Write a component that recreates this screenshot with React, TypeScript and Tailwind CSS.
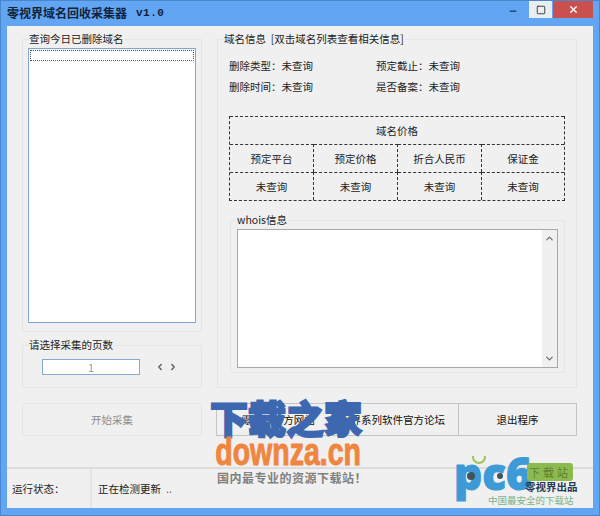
import { ChevronDown, ChevronLeft, ChevronRight, ChevronUp, Minus, Square, X } from 'lucide-react'

const cjk = "font-['Noto_Sans_CJK_SC','Liberation_Sans',sans-serif]"

function GroupBox({ label, className, children }: { label: string; className: string; children?: React.ReactNode }) {
  return (
    <div className={`relative border border-[#e6e6e6] ${className}`}>
      <span className="absolute left-[6px] -top-[9px] whitespace-pre bg-[#f0f0f0] pr-px text-[10.5px] leading-[16px] text-[#222]">{label}</span>
      {children}
    </div>
  )
}

function Cell({ children, last }: { children: React.ReactNode; last?: boolean }) {
  return (
    <div className={`flex h-7 items-center justify-center border-t border-dashed border-[#333] ${last ? '' : 'border-r'}`}>
      {children}
    </div>
  )
}

export default function App() {
  return (
    <div className={`relative flex h-[516px] w-[600px] flex-col overflow-hidden border border-[#4a86cc] bg-[#62a5f3] text-[10.5px] text-[#222] ${cjk}`}>
      {/* title bar */}
      <div className="flex h-[25px] shrink-0 items-start justify-between px-[6px]">
        <div className="mt-[2px] flex items-center text-xs font-bold leading-[20px] text-[#10233c]">
          零视界域名回收采集器
          <span className="ml-[9px] font-['Liberation_Mono',monospace] text-[11px] tracking-[0.5px]">v1.0</span>
        </div>
        <div className="flex h-[17px] items-stretch">
          <div className="mr-[4px] flex w-[24px] items-center justify-center">
            <Minus size={10} strokeWidth={3} className="mt-[3px] text-[#1c3553]" />
          </div>
          <div className="flex w-[23px] items-center justify-center bg-[#e9eef3]">
            <Square size={10} strokeWidth={2} className="text-[#222]" />
          </div>
          <div className="ml-px flex w-[40px] items-center justify-center bg-[#c9504e]">
            <X size={11} strokeWidth={3} className="text-white" />
          </div>
        </div>
      </div>

      {/* client area */}
      <div className="mx-[6px] mb-[7px] flex flex-1 flex-col bg-[#f0f0f0]">
        <div className="flex gap-[15px] pl-[15px] pt-[13px]">
          <div className="flex w-[180px] flex-col gap-[13px]">
            <GroupBox label="查询今日已删除域名" className="h-[293px] px-[5px] pt-[8px]">
              <div className="h-[275px] border border-[#7fa9d3] bg-white p-px">
                <div className="h-[11px] border border-dotted border-[#555]" />
              </div>
            </GroupBox>
            <GroupBox label="请选择采集的页数" className="flex h-[43px] items-center pl-[19px]">
              <div className="mt-[1px] flex h-[16px] w-[98px] items-center justify-center border border-[#86a9d0] bg-white text-[11px] text-[#999]">
                1
              </div>
              <div className="ml-[15px] flex gap-[3px] text-[#555]">
                <ChevronLeft size={10} strokeWidth={3} />
                <ChevronRight size={10} strokeWidth={3} />
              </div>
            </GroupBox>
          </div>

          <GroupBox label="域名信息  [双击域名列表查看相关信息]" className="h-[349px] w-[360px] px-[11px] pt-[18px]">
            <div className="grid grid-cols-[147px_1fr] gap-y-[5px] leading-[16px]">
              <span>删除类型：未查询</span>
              <span>预定截止：未查询</span>
              <span>删除时间：未查询</span>
              <span>是否备案：未查询</span>
            </div>

            <div className="mt-[21px] w-[336px] border-x border-b border-dashed border-[#333]">
              <div className="flex h-7 items-center justify-center border-t border-dashed border-[#333]">域名价格</div>
              <div className="grid grid-cols-[84px_84px_84px_1fr]">
                <Cell>预定平台</Cell>
                <Cell>预定价格</Cell>
                <Cell>折合人民币</Cell>
                <Cell last>保证金</Cell>
                <Cell>未查询</Cell>
                <Cell>未查询</Cell>
                <Cell>未查询</Cell>
                <Cell last>未查询</Cell>
              </div>
            </div>

            <GroupBox label="whois信息" className="ml-px mt-[19px] h-[153px] w-[335px] px-[6px] pt-[8px]">
              <div className="flex h-[139px] w-[321px] justify-end border border-[#a8a8a8] bg-white">
                <div className="flex w-[15px] flex-col items-center justify-between bg-[#f0f0f0] py-[3px] text-[#666]">
                  <ChevronUp size={11} strokeWidth={2.5} />
                  <ChevronDown size={11} strokeWidth={2.5} />
                </div>
              </div>
            </GroupBox>
          </GroupBox>
        </div>

        {/* buttons */}
        <div className="mt-[15px] flex pl-[15px]">
          <div className="flex h-[33px] w-[180px] items-center justify-center border border-[#e6e6e6] text-[#8c8c8c]">开始采集</div>
          <div className="ml-[14px] flex h-[33px] w-[361px] border border-[#c4c4c4] text-[#111]">
            <div className="flex w-[123px] items-center justify-center border-r border-[#c4c4c4] whitespace-nowrap">零视界官方网站</div>
            <div className="flex w-[119px] items-center justify-end whitespace-nowrap border-r border-[#c4c4c4] pr-[13px]">零视界系列软件官方论坛</div>
            <div className="flex flex-1 items-center justify-center">退出程序</div>
          </div>
        </div>

        {/* status bar */}
        <div className="mt-[31px] flex flex-1 border-t-2 border-[#dcdcdc]">
          <div className="flex w-[85px] items-center border-r-2 border-[#e4e4e4] pl-[5px]">运行状态：</div>
          <div className="flex items-center pl-[6px]">
            正在检测更新<span className="ml-[5px] text-[#666]">..</span>
          </div>
        </div>
      </div>

      {/* downza watermark */}
      <div className="absolute left-[209px] top-[395px] flex w-[152px] flex-col items-center">
        <div className="whitespace-nowrap text-[38px] font-black leading-[42px] text-[#3d68b0] [-webkit-text-stroke:2px_#3d68b0]">下载之家</div>
        <div className="-mt-[1px] ml-[4px] scale-x-75 whitespace-nowrap font-['Liberation_Sans',sans-serif] text-[38px] font-bold leading-[30px] text-[#f08540] [-webkit-text-stroke:1px_#f08540]">downza.cn</div>
        <div className="ml-[7px] mt-[3px] self-start whitespace-nowrap text-xs font-bold leading-[16px] tracking-[0.5px] text-[#808080]">国内最专业的资源下载站！</div>
      </div>

      {/* pc6 watermark */}
      <div className="absolute left-[453px] top-[455px] h-[52px] w-[125px]">
        <span className="absolute -top-[13px] left-0 font-['Open_Sans',sans-serif] text-[44px] font-extrabold leading-[60px] text-[#3d9ad6] [-webkit-text-stroke:1px_#3d9ad6]">pc6</span>
        <span className="absolute left-[13px] top-[16px] size-[8px] rounded-full bg-[#40535f]" />
        <span className="absolute left-[43px] top-[17px] size-[6px] rounded-full bg-[#40535f]" />
        <span className="absolute left-[18px] top-0 h-[8px] w-[14px] rounded-b-full border-x-2 border-b-2 border-[#9ac45c]" />
        <span className="absolute left-[73px] top-[7px] flex h-[18px] w-[46px] items-center justify-center whitespace-nowrap rounded-[3px] bg-[#8dba4e] text-[11px] tracking-[3px] text-[#5d7f30]">下载站</span>
        <span className="absolute left-[71px] top-[24px] whitespace-nowrap text-[10.5px] font-bold leading-[14px] text-[#1d3b57]">零视界出品</span>
        <span className="absolute left-[34px] top-[37px] whitespace-nowrap text-[9.5px] leading-[14px] text-[#7ab38c]">中国最安全的下载站</span>
      </div>
    </div>
  )
}
